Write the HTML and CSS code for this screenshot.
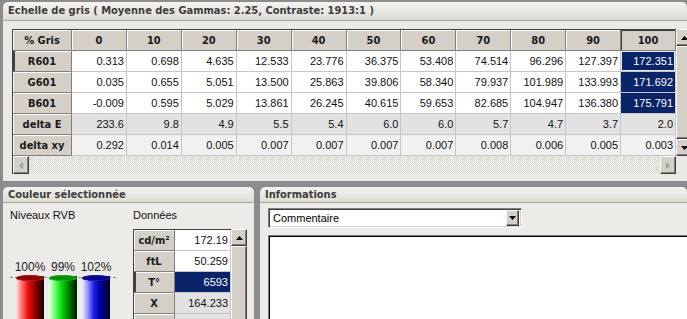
FILE: index.html
```html
<!DOCTYPE html>
<html lang="fr">
<head>
<meta charset="utf-8">
<title>Echelle de gris</title>
<link rel="stylesheet" href="styles.css">
</head>
<body>
<div class="frame">
  <section class="panel top">
    <div class="panel-title">Echelle de gris ( Moyenne des Gammas: 2.25, Contraste: 1913:1 )</div>
    <div class="top-body">
      <div class="grid-row">
        <div class="grid-wrap">
          <table class="grid">
            <colgroup><col class="c-head"><col span="11"></colgroup>
            <tr>
              <th>% Gris</th><th>0</th><th>10</th><th>20</th><th>30</th><th>40</th><th>50</th><th>60</th><th>70</th><th>80</th><th>90</th><th class="cur-col">100</th>
            </tr>
            <tr class="white">
              <th class="cur-row">R601</th><td>0.313</td><td>0.698</td><td>4.635</td><td>12.533</td><td>23.776</td><td>36.375</td><td>53.408</td><td>74.514</td><td>96.296</td><td>127.397</td><td class="sel focus">172.351</td>
            </tr>
            <tr class="white">
              <th>G601</th><td>0.035</td><td>0.655</td><td>5.051</td><td>13.500</td><td>25.863</td><td>39.806</td><td>58.340</td><td>79.937</td><td>101.989</td><td>133.993</td><td class="sel">171.692</td>
            </tr>
            <tr class="white">
              <th>B601</th><td>-0.009</td><td>0.595</td><td>5.029</td><td>13.861</td><td>26.245</td><td>40.615</td><td>59.653</td><td>82.685</td><td>104.947</td><td>136.380</td><td class="sel">175.791</td>
            </tr>
            <tr class="grey">
              <th>delta E</th><td>233.6</td><td>9.8</td><td>4.9</td><td>5.5</td><td>5.4</td><td>6.0</td><td>6.0</td><td>5.7</td><td>4.7</td><td>3.7</td><td>2.0</td>
            </tr>
            <tr class="light">
              <th>delta xy</th><td>0.292</td><td>0.014</td><td>0.005</td><td>0.007</td><td>0.007</td><td>0.007</td><td>0.007</td><td>0.008</td><td>0.006</td><td>0.005</td><td>0.003</td>
            </tr>
          </table>
        </div>
        <div class="vscroll">
          <div class="sbtn"><svg width="7" height="4" viewBox="0 0 7 4"><polygon points="0,4 7,4 3.5,0" fill="#000"/></svg></div>
          <div class="thumb"></div>
          <div class="sbtn"><svg width="7" height="4" viewBox="0 0 7 4"><polygon points="0,0 7,0 3.5,4" fill="#000"/></svg></div>
        </div>
      </div>
      <div class="hscroll">
        <div class="sbtn h"><svg width="4" height="7" viewBox="0 0 4 7"><polygon points="4,0 4,7 0,3.5" fill="#a0a0a0"/></svg></div>
        <div class="track"></div>
        <div class="sbtn h"><svg width="4" height="7" viewBox="0 0 4 7"><polygon points="0,0 0,7 4,3.5" fill="#a0a0a0"/></svg></div>
      </div>
    </div>
  </section>

  <div class="bottom">
    <section class="panel left">
      <div class="panel-title small">Couleur sélectionnée</div>
      <div class="left-body">
        <div class="rvb">
          <div class="label">Niveaux RVB</div>
          <div class="bars">
            <div class="ref-line"></div>
            <div class="bar"><span>100%</span><div class="cyl red"></div></div>
            <div class="bar"><span>99%</span><div class="cyl green"></div></div>
            <div class="bar"><span>102%</span><div class="cyl blue"></div></div>
          </div>
        </div>
        <div class="donnees">
          <div class="label">Données</div>
          <div class="data-row">
            <div class="grid-wrap">
              <table class="grid small-grid">
                <colgroup><col class="c-h2"><col></colgroup>
                <tr class="white"><th>cd/m²</th><td>172.19</td></tr>
                <tr class="white"><th>ftL</th><td>50.259</td></tr>
                <tr class="white"><th class="cur-row">T°</th><td class="sel">6593</td></tr>
                <tr class="grey"><th>X</th><td>164.233</td></tr>
                <tr class="grey"><th>&nbsp;</th><td>&nbsp;</td></tr>
              </table>
            </div>
            <div class="vscroll small">
              <div class="sbtn"><svg width="7" height="4" viewBox="0 0 7 4"><polygon points="0,4 7,4 3.5,0" fill="#000"/></svg></div>
              <div class="thumb"></div>
            </div>
          </div>
        </div>
      </div>
    </section>

    <section class="panel right">
      <div class="panel-title small">Informations</div>
      <div class="right-body">
        <div class="combo">
          <span class="combo-text">Commentaire</span>
          <div class="combo-btn"><svg width="7" height="4" viewBox="0 0 7 4"><polygon points="0,0 7,0 3.5,4" fill="#000"/></svg></div>
        </div>
        <div class="memo"></div>
      </div>
    </section>
  </div>
</div>
</body>
</html>
```

FILE: styles.css
```css
* { box-sizing: border-box; }
html, body { margin: 0; padding: 0; }
body {
  width: 687px;
  height: 319px;
  overflow: hidden;
  background: #8c8c8c;
  font-family: "Liberation Sans", Arial, sans-serif;
  font-size: 11px;
  color: #000;
}
.frame {
  height: 319px;
  padding: 2px 0 0 3px;
  display: flex;
  flex-direction: column;
}
.panel { overflow: hidden; }
.panel-title {
  height: 19px;
  line-height: 18px;
  padding-left: 5px;
  font-family: "DejaVu Sans Condensed", "DejaVu Sans", sans-serif;
  font-weight: bold;
  font-size: 11px;
  color: #3c3c3c;
  background: linear-gradient(#f5f4f0, #dedbd3);
  border-radius: 5px 5px 0 0;
  border-bottom: 1px solid #a9a59c;
  white-space: nowrap;
}
.panel-title.small { height: 16px; line-height: 15px; }

.top-body {
  background: #ebe9e5;
  padding: 8px 0 7px 9px;
}
.grid-row { display: flex; }
.grid-wrap {
  border-top: 1px solid #404040;
  border-left: 1px solid #404040;
  background: #fff;
}
.grid {
  border-collapse: separate;
  border-spacing: 0;
  table-layout: fixed;
  width: 663px;
}
.grid .c-head { width: 59px; }
.grid tr { height: 21px; }
.grid th, .grid td {
  height: 21px;
  padding: 0 2px 0 0;
  border-right: 1px solid #c6c6c6;
  border-bottom: 1px solid #c6c6c6;
  white-space: nowrap;
  overflow: hidden;
}
.grid th {
  background: #d4d0c8;
  border-right-color: #808080;
  border-bottom-color: #808080;
  box-shadow: inset 1px 1px #fff;
  font-family: "DejaVu Sans Condensed", "DejaVu Sans", sans-serif;
  font-weight: bold;
  font-size: 11px;
  color: #1a1a1a;
  text-align: center;
  padding: 0;
}
.grid th.cur-col { box-shadow: inset 1px 1px #404040; }
.grid th.cur-row { box-shadow: inset 2px 0 #404040, inset 0 1px #fff; }
.grid td {
  text-align: right;
  font-size: 11px;
  color: #111;
}
.grid tr.white td { background: #fff; }
.grid tr.grey td { background: #e2e2e2; }
.grid tr.light td { background: #f1f1f1; }
.grid td.sel { background: #0a246a !important; color: #fff; }
.grid td.sel.focus { box-shadow: inset 0 0 0 1px #e8e8e8; }

.vscroll {
  width: 16px;
  flex: none;
  display: flex;
  flex-direction: column;
  background: #d4d0c8;
}
.sbtn {
  width: 16px;
  height: 17px;
  flex: none;
  background: #d4d0c8;
  border-top: 1px solid #fff;
  border-left: 1px solid #fff;
  border-right: 1px solid #404040;
  border-bottom: 1px solid #404040;
  box-shadow: inset -1px -1px #808080;
  display: flex;
  align-items: center;
  justify-content: center;
}
.thumb {
  flex: 1;
  background: #d4d0c8;
  border-top: 1px solid #fff;
  border-left: 1px solid #fff;
  border-right: 1px solid #404040;
  border-bottom: 1px solid #404040;
  box-shadow: inset -1px -1px #808080;
}
.hscroll {
  width: 664px;
  height: 18px;
  display: flex;
  border-left: 1px solid #404040;
}
.sbtn.h { height: 18px; width: 16px; }
.track {
  flex: 1;
  background-color: #fff;
  background-image: repeating-conic-gradient(#d4d0c8 0 25%, #ffffff 0 50%);
  background-size: 2px 2px;
}

.bottom {
  flex: 1;
  margin-top: 6px;
  display: flex;
  gap: 6px;
  min-height: 0;
}
.panel.left { width: 251px; flex: none; display: flex; flex-direction: column; }
.panel.right { flex: 1; display: flex; flex-direction: column; border-radius: 5px 0 0 0; }
.left-body, .right-body {
  flex: 1;
  background: #ecebe7;
}
.left-body {
  display: flex;
  padding: 6px 0 0 7px;
}
.label {
  height: 13px;
  line-height: 13px;
  font-size: 11px;
  color: #111;
}
.rvb { width: 123px; flex: none; }
.bars {
  position: relative;
  display: flex;
  gap: 5px;
  margin-top: 39px;
  padding-left: 6px;
}
.ref-line {
  position: absolute;
  left: 0;
  top: 16px;
  width: 106px;
  border-top: 1px dashed #8a8a8a;
}
.bar {
  width: 28px;
  display: flex;
  flex-direction: column;
  align-items: center;
}
.bar span {
  font-size: 12px;
  line-height: 12px;
  height: 12px;
  white-space: nowrap;
  color: #222;
}
.cyl {
  position: relative;
  width: 28px;
  height: 60px;
  margin-top: 3px;
  border-radius: 0 0 0 0;
}
.cyl::before {
  content: "";
  position: absolute;
  left: 0;
  top: -1px;
  width: 28px;
  height: 6px;
  border-radius: 50%;
}
.cyl.red { background: linear-gradient(to right, #ffe4e4 0%, #ff8080 18%, #f01010 42%, #a00000 65%, #3a0000 88%, #1a0000 100%); }
.cyl.red::before { background: #8c0000; box-shadow: inset 0 0 0 1px #b02020; }
.cyl.green { background: linear-gradient(to right, #e8ffe8 0%, #80ff80 18%, #10e010 42%, #00a000 62%, #003a00 88%, #001a00 100%); }
.cyl.green::before { background: #009000; box-shadow: inset 0 0 0 1px #20b020; }
.cyl.blue { background: linear-gradient(to right, #f0f0ff 0%, #a0a0ff 18%, #2020f0 42%, #0000a8 62%, #00004a 88%, #000020 100%); }
.cyl.blue::before { background: #00008c; box-shadow: inset 0 0 0 1px #2020b0; }

.donnees { width: 115px; flex: none; }
.data-row { display: flex; margin-top: 7px; }
.small-grid { width: 97px; }
.small-grid .c-h2 { width: 41px; }
.vscroll.small { height: 120px; }

.right-body {
  padding: 5px 0 0 8px;
  display: flex;
  flex-direction: column;
}
.combo {
  width: 254px;
  height: 20px;
  flex: none;
  background: #fff;
  border-top: 1px solid #808080;
  border-left: 1px solid #808080;
  border-right: 1px solid #fff;
  border-bottom: 1px solid #fff;
  box-shadow: inset 1px 1px #404040, inset -1px -1px #d4d0c8;
  display: flex;
  align-items: center;
  padding: 0 2px 0 4px;
}
.combo-text { flex: 1; font-size: 11px; color: #000; }
.combo-btn {
  width: 13px;
  height: 16px;
  background: #d4d0c8;
  border-top: 1px solid #fff;
  border-left: 1px solid #fff;
  border-right: 1px solid #404040;
  border-bottom: 1px solid #404040;
  box-shadow: inset -1px -1px #808080;
  display: flex;
  align-items: center;
  justify-content: center;
}
.memo {
  margin-top: 7px;
  width: 440px;
  height: 120px;
  flex: none;
  background: #fff;
  border-top: 1px solid #808080;
  border-left: 1px solid #808080;
  box-shadow: inset 1px 1px #000;
}
```
